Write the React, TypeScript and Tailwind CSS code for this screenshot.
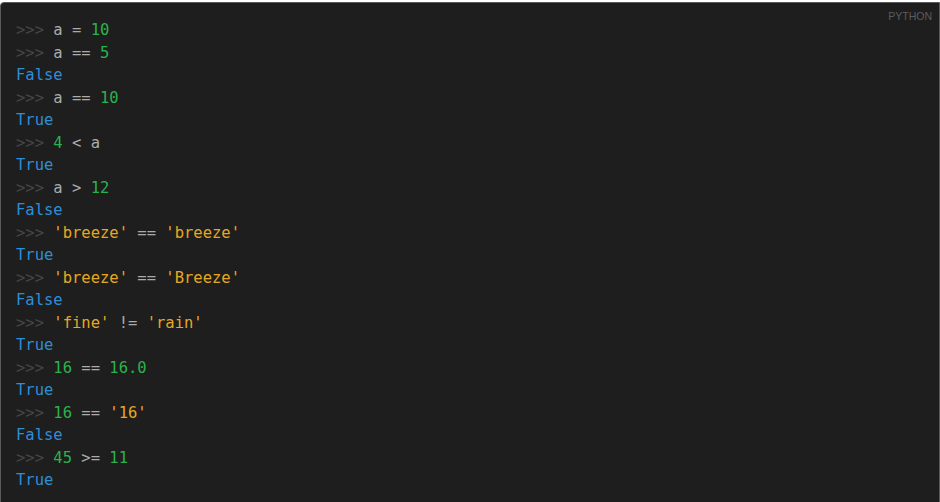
import React from 'react';

type Tok = { t: string; c: 'p' | 'o' | 'n' | 's' | 'r' };

const colors: Record<Tok['c'], string> = {
  p: 'text-[#454545]',
  o: 'text-[#ababab]',
  n: 'text-[#2bb24c]',
  s: 'text-[#e5a823]',
  r: 'text-[#2d8ed8]',
};

const prompt = (...toks: Tok[]): Tok[] => [{ t: '>>> ', c: 'p' }, ...toks];
const o = (t: string): Tok => ({ t, c: 'o' });
const n = (t: string): Tok => ({ t, c: 'n' });
const s = (t: string): Tok => ({ t, c: 's' });
const r = (t: string): Tok[] => [{ t, c: 'r' }];

const lines: Tok[][] = [
  prompt(o('a = '), n('10')),
  prompt(o('a == '), n('5')),
  r('False'),
  prompt(o('a == '), n('10')),
  r('True'),
  prompt(n('4'), o(' < a')),
  r('True'),
  prompt(o('a > '), n('12')),
  r('False'),
  prompt(s("'breeze'"), o(' == '), s("'breeze'")),
  r('True'),
  prompt(s("'breeze'"), o(' == '), s("'Breeze'")),
  r('False'),
  prompt(s("'fine'"), o(' != '), s("'rain'")),
  r('True'),
  prompt(n('16'), o(' == '), n('16.0')),
  r('True'),
  prompt(n('16'), o(' == '), s("'16'")),
  r('False'),
  prompt(n('45'), o(' >= '), n('11')),
  r('True'),
];

export default function App() {
  return (
    <div className="w-[940px] h-[502px] bg-white pt-[2px] overflow-hidden">
      <div className="relative h-[520px] bg-[#1e1e1e] border border-[#5a5a5a] rounded-tl-[4px] pl-[15px] pt-[16px]">
        <span className="absolute top-[6px] right-[7px] text-[10.5px] text-[#5c5c5c] font-['Liberation_Sans',sans-serif]">
          PYTHON
        </span>
        <pre className="font-['DejaVu_Sans_Mono',monospace] text-[15.5px] leading-[22.5px]">
          {lines.map((line, i) => (
            <div key={i}>
              {line.map((tok, j) => (
                <span key={j} className={colors[tok.c]}>
                  {tok.t}
                </span>
              ))}
            </div>
          ))}
        </pre>
      </div>
    </div>
  );
}
